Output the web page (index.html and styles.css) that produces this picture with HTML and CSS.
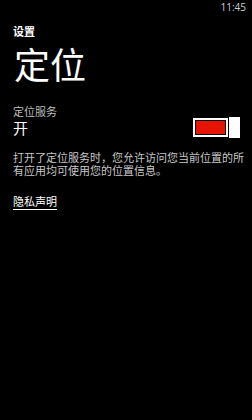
FILE: index.html
```html
<!DOCTYPE html>
<html lang="zh-CN">
<head>
<meta charset="utf-8">
<link rel="stylesheet" href="styles.css">
</head>
<body>
<div class="status"><span class="time">11:45</span></div>
<div class="page">
  <div class="app-title">设置</div>
  <div class="page-title">定位</div>
  <div class="setting">
    <div class="setting-text">
      <div class="label">定位服务</div>
      <div class="value">开</div>
    </div>
    <div class="toggle">
      <div class="track"><div class="fill"></div></div>
      <div class="thumb"></div>
    </div>
  </div>
  <p class="desc">打开了定位服务时，您允许访问您当前位置的所有应用均可使用您的位置信息。</p>
  <a class="link">隐私声明</a>
</div>
</body>
</html>
```
FILE: styles.css
```css
html, body {
  margin: 0;
  padding: 0;
  background: #000;
  color: #fff;
  font-family: "Noto Sans CJK SC", "Noto Sans", sans-serif;
}
.status {
  height: 16px;
  display: flex;
  justify-content: flex-end;
  padding-right: 6px;
}
.time {
  font-family: "Open Sans", "Noto Sans", sans-serif;
  font-size: 10px;
  color: #cfcfcf;
  line-height: 14px;
}
.page {
  padding: 0 4px 0 13px;
}
.app-title {
  font-size: 11px;
  font-weight: bold;
  line-height: 14px;
  margin-top: 8px;
}
.page-title {
  font-size: 36px;
  line-height: 40px;
  margin-top: 5px;
  margin-left: 1px;
}
.setting {
  display: flex;
  justify-content: space-between;
  align-items: flex-end;
  margin-top: 21px;
  margin-right: 8px;
}
.label {
  font-size: 11px;
  color: #bdbdbd;
  line-height: 14px;
}
.value {
  font-size: 15px;
  line-height: 20px;
}
.toggle {
  display: flex;
  align-items: center;
  gap: 1px;
}
.track {
  border: 2px solid #fff;
  padding: 1px;
  width: 29px;
  height: 13px;
}
.fill {
  width: 100%;
  height: 100%;
  background: #e51400;
}
.thumb {
  width: 11px;
  height: 21px;
  background: #fff;
}
.desc {
  font-size: 11px;
  line-height: 13px;
  color: #c8c8c8;
  margin: 13px 0 0 0;
}
.link {
  display: inline-block;
  margin-top: 17px;
  font-size: 11px;
  line-height: 14px;
  color: #fff;
  text-decoration: underline;
  text-underline-offset: 3px;
}
```
